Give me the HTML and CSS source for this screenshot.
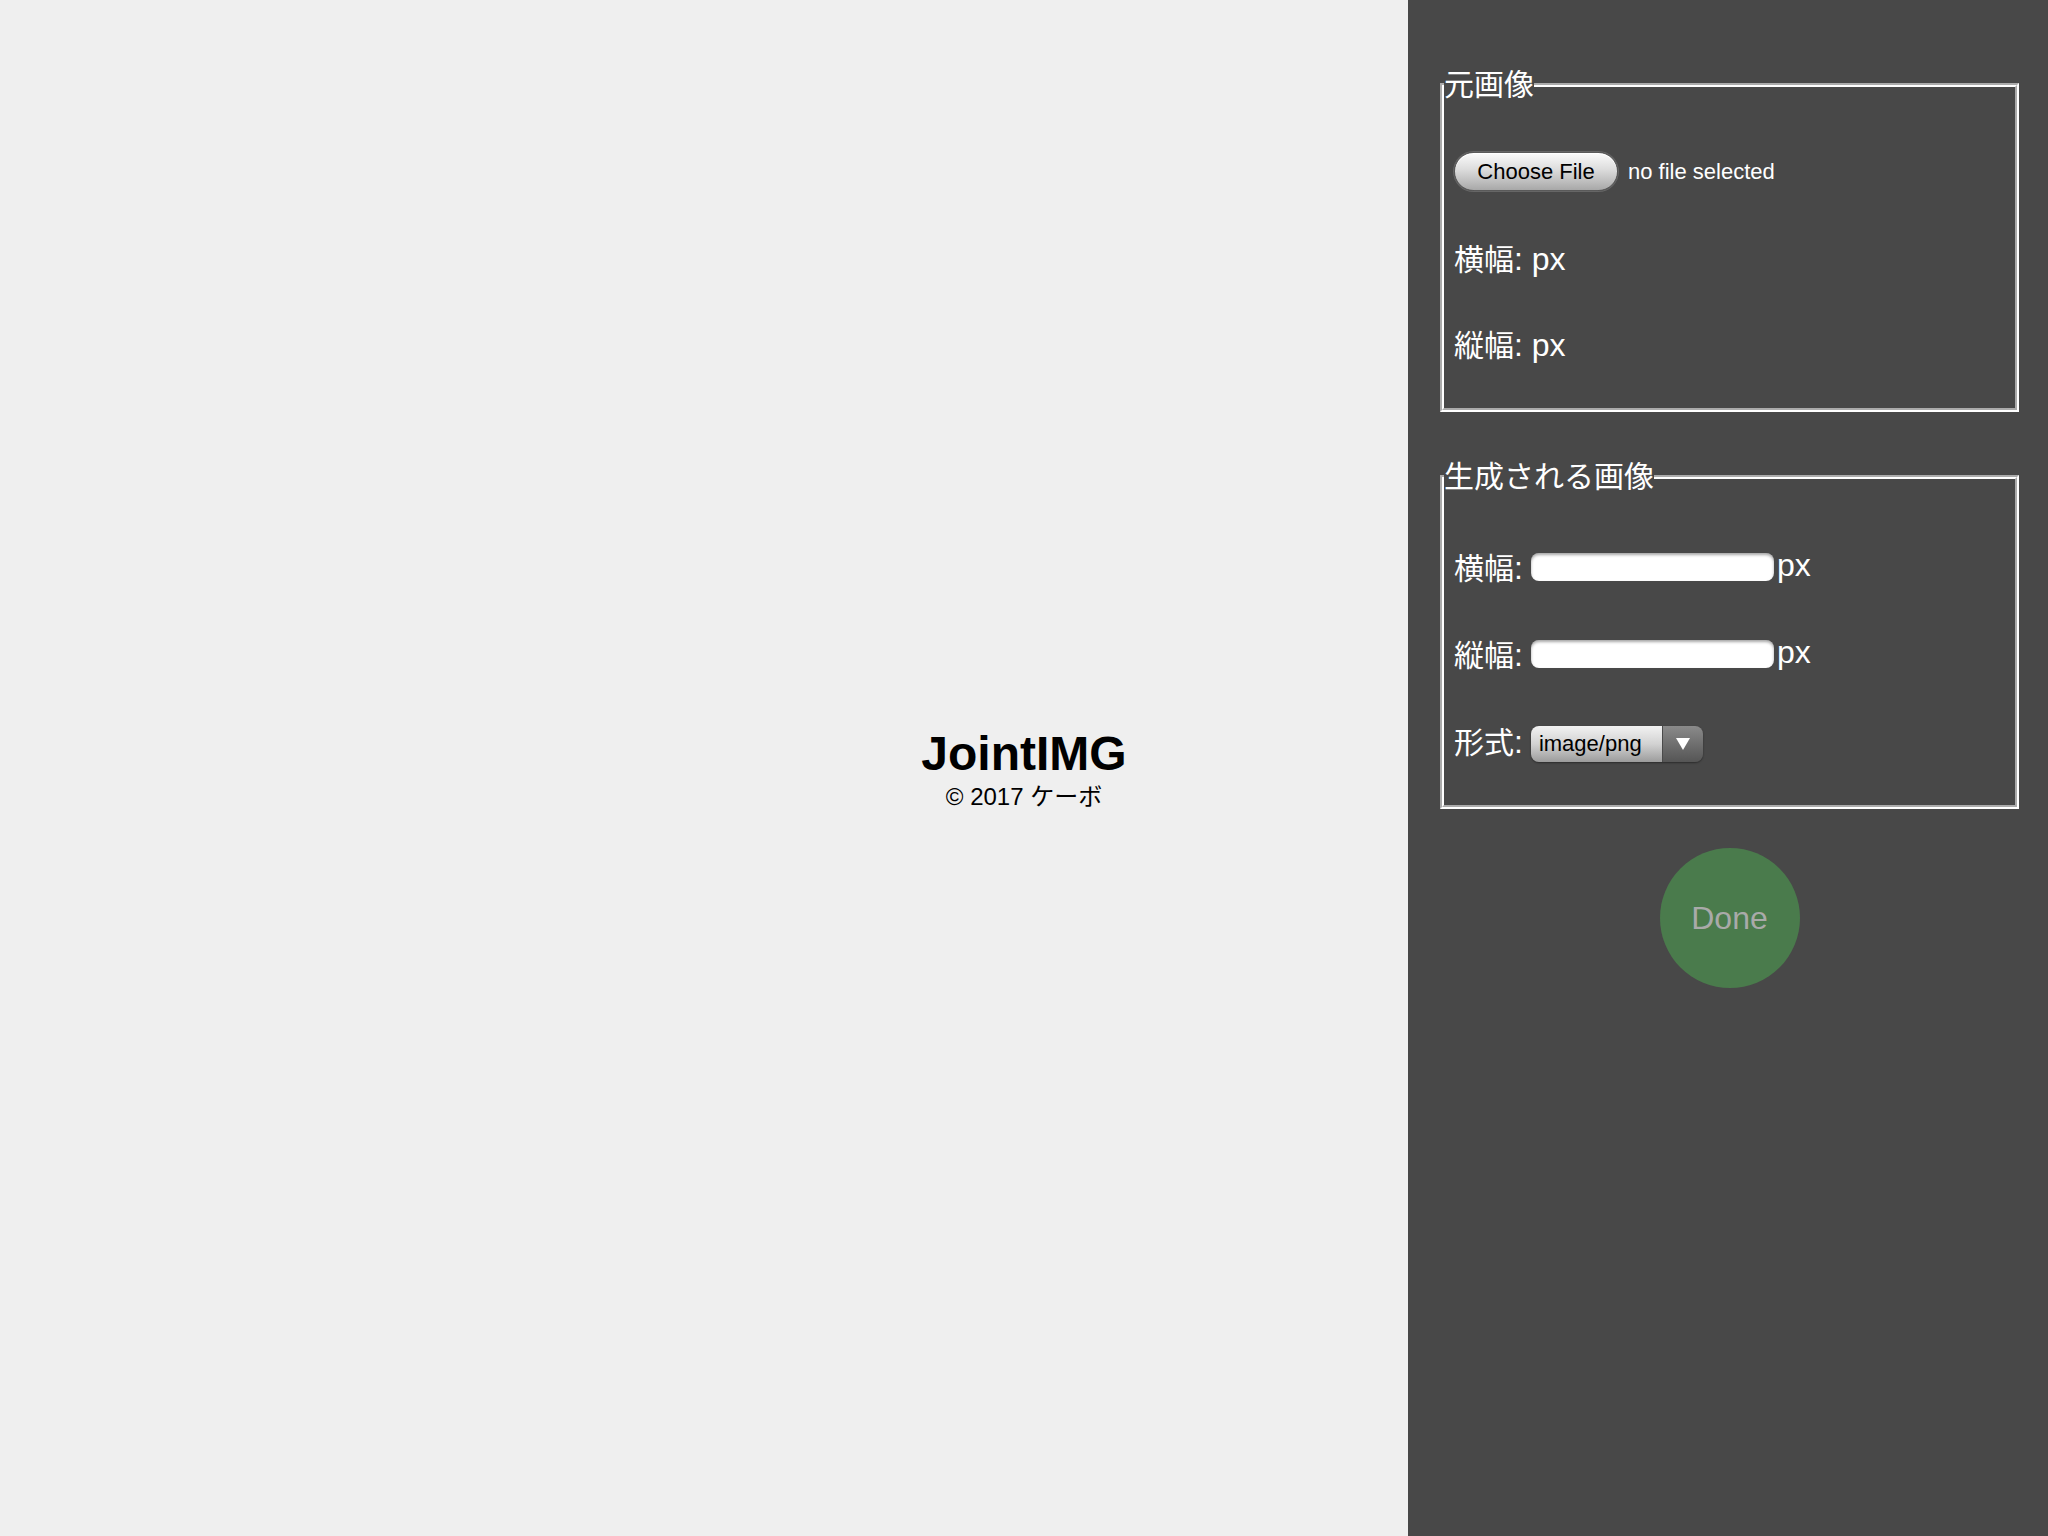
FILE: index.html
```html
<!DOCTYPE html>
<html lang="ja">
<head>
<meta charset="utf-8">
<title>JointIMG</title>
<link rel="stylesheet" href="styles.css">
</head>
<body>
<main class="stage">
  <div class="brand">
    <h1 class="brand-title">JointIMG</h1>
    <p class="brand-copy">© 2017 ケーボ</p>
  </div>
</main>
<aside class="panel">
  <fieldset class="group group-source">
    <legend class="group-legend">元画像</legend>
    <div class="rows rows-source">
      <div class="row">
        <button type="button" class="file-btn">Choose File</button>
        <span class="file-name">no file selected</span>
      </div>
      <div class="row"><span class="label"><span class="jp">横幅</span>: px</span></div>
      <div class="row"><span class="label"><span class="jp">縦幅</span>: px</span></div>
    </div>
  </fieldset>
  <fieldset class="group group-output">
    <legend class="group-legend">生成される画像</legend>
    <div class="rows rows-output">
      <div class="row">
        <span class="label"><span class="jp">横幅</span>:</span>
        <input type="text" class="num-input">
        <span class="unit">px</span>
      </div>
      <div class="row">
        <span class="label"><span class="jp">縦幅</span>:</span>
        <input type="text" class="num-input">
        <span class="unit">px</span>
      </div>
      <div class="row">
        <span class="label"><span class="jp">形式</span>:</span>
        <div class="select">
          <span class="select-value">image/png</span>
          <span class="select-arrow"><svg width="14" height="12" viewBox="0 0 14 12"><path d="M0 0 H14 L7 12 Z" fill="#fff"/></svg></span>
        </div>
      </div>
    </div>
  </fieldset>
  <button type="button" class="done">Done</button>
</aside>
</body>
</html>
```
FILE: styles.css
```css
html, body {
  margin: 0;
  padding: 0;
}
body {
  width: 2048px;
  height: 1536px;
  background: #efefef;
  font-family: "Liberation Sans", "Noto Sans CJK JP", sans-serif;
  overflow: hidden;
}
.stage {
  width: 2048px;
  height: 1536px;
  display: flex;
  align-items: center;
  justify-content: center;
}
.brand {
  text-align: center;
  color: #000;
}
.brand-title {
  margin: 0;
  font-size: 48px;
  line-height: 56px;
  font-weight: bold;
}
.brand-copy {
  margin: 1px 0 0;
  font-size: 24px;
  line-height: 28px;
}
.panel {
  position: fixed;
  top: 0;
  right: 0;
  width: 640px;
  height: 1536px;
  box-sizing: border-box;
  background: #484848;
  padding: 67px 29px 0 32px;
  display: flex;
  flex-direction: column;
  color: #fff;
}
.group {
  margin: 0;
  padding: 0;
  border: 4px groove #fff;
  min-width: 0;
}
.group-output {
  margin-top: 47px;
}
.group-legend {
  padding: 0;
  font-size: 30px;
  line-height: 36px;
  color: #fff;
}
.rows {
  display: flex;
  flex-direction: column;
  gap: 30.5px;
  padding: 41px 10px 38px;
}
.rows-output {
  padding: 43px 10px 38px;
  gap: 32px;
}
.row {
  height: 55px;
  display: flex;
  align-items: center;
  font-size: 32px;
}
.label {
  font-size: 32px;
  white-space: nowrap;
}
.jp {
  font-size: 30px;
}
.file-btn {
  height: 39px;
  width: 164px;
  padding: 0;
  border: 1px solid #5a5a5a;
  border-radius: 20px;
  background: linear-gradient(#fbfbfb 0%, #dcdcdc 45%, #a8a8a8 100%);
  box-shadow: inset 0 1px 0 #fff, 0 0 0 1px #666;
  font-family: "Liberation Sans", sans-serif;
  font-size: 22px;
  color: #000;
}
.file-name {
  margin-left: 10px;
  font-size: 22px;
  color: #fff;
}
.num-input {
  margin: 3px 0 0 8px;
  width: 243px;
  height: 28px;
  box-sizing: border-box;
  border: none;
  border-radius: 8px;
  background: #fff;
  box-shadow: inset 0 2px 3px rgba(0, 0, 0, 0.35);
  padding: 0 6px;
  font-size: 22px;
}
.unit {
  margin-left: 3px;
  font-size: 32px;
}
.select {
  margin: 8px 0 0 8px;
  width: 172px;
  height: 36px;
  display: flex;
  border-radius: 8px;
  overflow: hidden;
  box-shadow: 0 1px 2px rgba(0, 0, 0, 0.4);
}
.select-value {
  flex: 1;
  display: flex;
  align-items: center;
  padding-left: 8px;
  font-size: 22px;
  color: #000;
  background: linear-gradient(#f2f2f2 0%, #d2d2d2 50%, #9c9c9c 100%);
}
.select-arrow {
  width: 40px;
  display: flex;
  align-items: center;
  justify-content: center;
  border-left: 1px solid #4a4a4a;
  background: linear-gradient(#8a8a8a 0%, #6a6a6a 60%, #555 100%);
}
.done {
  margin: 39px auto 0;
  width: 140px;
  height: 140px;
  border-radius: 50%;
  border: none;
  padding: 0;
  background: #4a7b4c;
  color: #a9aaa9;
  font-family: "Liberation Sans", sans-serif;
  font-size: 32px;
}
```
